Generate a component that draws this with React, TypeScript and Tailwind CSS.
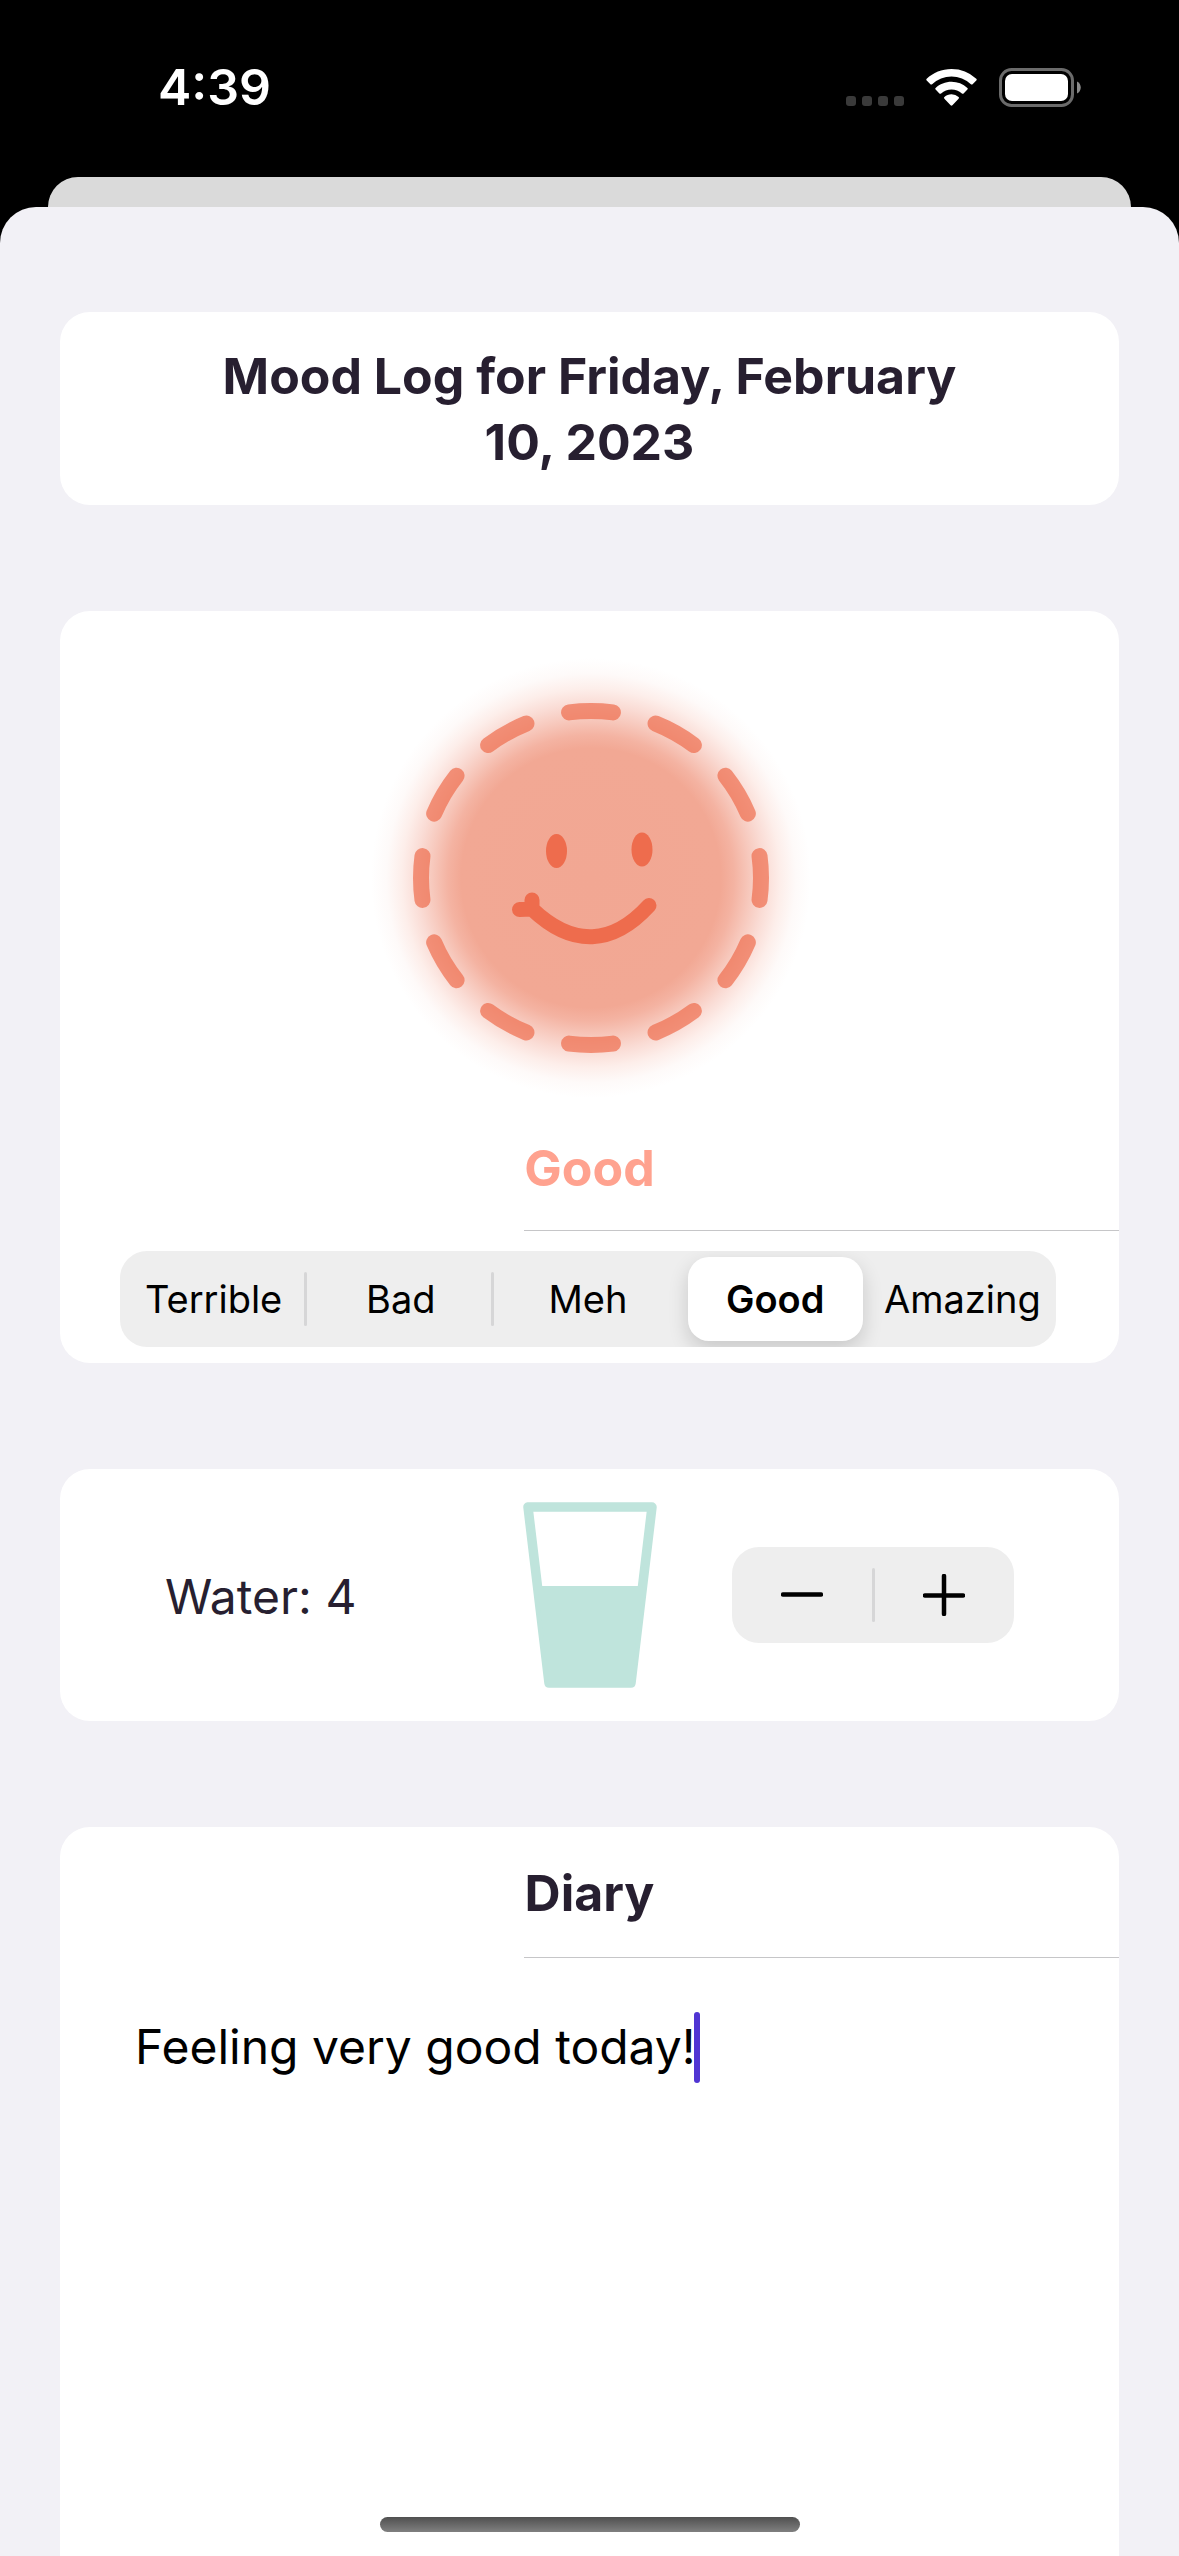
import { useState } from "react";
import type { ReactNode } from "react";

const moods = ["Terrible", "Bad", "Meh", "Good", "Amazing"];

function StatusBar() {
  return (
    <header className="flex h-[177px] items-start justify-between bg-black pt-[68px] pr-[98px] pl-[158px]">
      <time className="-mt-[14px] text-[50px] leading-[66px] font-semibold text-white">4:39</time>
      <div className="flex items-end">
        <div className="mr-[22px] flex gap-[6px] pb-px" aria-hidden="true">
          <span className="size-[10px] rounded-[3px] bg-[#3a3a3a]" />
          <span className="size-[10px] rounded-[3px] bg-[#3a3a3a]" />
          <span className="size-[10px] rounded-[3px] bg-[#3a3a3a]" />
          <span className="size-[10px] rounded-[3px] bg-[#3a3a3a]" />
        </div>
        <svg className="mr-[22px] h-[39px] w-[51px]" viewBox="0 0 51 39" aria-label="Wi-Fi" role="img">
          <g fill="#fff">
            <path d="M25.5 1C15.9 1 7.2 4.700 .7 10.700q-.9.900 0 1.800L4.400 16.200q.8.800 1.700 0A28.300 28.300 0 0 1 44.900 16.200q.9.800 1.700 0L50.300 12.500q.9-.9 0-1.800A36.500 36.500 0 0 0 25.500 1Z" />
            <path d="M25.500 13.700c-6.100 0-11.700 2.300-15.900 6.200q-.9.900 0 1.700l3.800 3.800q.8.800 1.700.1a15.600 15.600 0 0 1 20.800 0q.9.700 1.700-.1l3.800-3.800q.9-.8 0-1.700a23.500 23.500 0 0 0-15.900-6.200Z" />
            <path d="M25.500 26.300c-2.700 0-5.200 1-7.100 2.700q-.9.800 0 1.700l6.200 6.600q.9.900 1.800 0l6.200-6.600q.9-.9 0-1.700a10.500 10.500 0 0 0-7.100-2.700Z" />
          </g>
        </svg>
        <svg className="h-[39px] w-[82px]" viewBox="0 0 82 39" aria-label="Battery full" role="img">
          <rect x="1.500" y="1.500" width="72" height="36" rx="11" fill="none" stroke="#6b6b6b" strokeWidth="3" />
          <rect x="6" y="6" width="63" height="27" rx="7" fill="#fff" />
          <path d="M78 13.500c5 2 5 10 0 12Z" fill="#8a8a8a" />
        </svg>
      </div>
    </header>
  );
}

function Card({ children, className = "" }: { children: ReactNode; className?: string }) {
  return <section className={`bg-white ${className}`}>{children}</section>;
}

function Separator() {
  return <div className="ml-[43.8%] h-px bg-[#c6c6c8]" />;
}

function HappyFace() {
  return (
    <svg className="mx-auto h-[470px] w-[440px]" viewBox="0 0 440 470" role="img" aria-label="Smiling face">
      <defs>
        <radialGradient id="glow" gradientUnits="userSpaceOnUse" cx="221" cy="238" r="220">
          <stop offset="0" stopColor="#f2a793" />
          <stop offset="0.59" stopColor="#f2a894" />
          <stop offset="0.65" stopColor="#f4b3a2" />
          <stop offset="0.72" stopColor="#f7c8bc" />
          <stop offset="0.79" stopColor="#fadcd5" />
          <stop offset="0.86" stopColor="#fdeeea" />
          <stop offset="0.93" stopColor="#fefaf9" />
          <stop offset="1" stopColor="#ffffff" />
        </radialGradient>
      </defs>
      <circle cx="221" cy="238" r="220" fill="url(#glow)" />
      <ellipse
        cx="221"
        cy="238"
        rx="170"
        ry="167"
        fill="none"
        stroke="#ee6c4d"
        strokeOpacity="0.7"
        strokeWidth="16"
        strokeLinecap="round"
        pathLength={360}
        strokeDasharray="15 15"
        strokeDashoffset="7.500"
      />
      <g fill="#ee6c4d">
        <ellipse cx="186.500" cy="211" rx="10.500" ry="17" />
        <ellipse cx="272" cy="209.500" rx="10.500" ry="17" />
      </g>
      <path
        d="M149.500 269.500L161 269M162 260V269C203 308 243 305 279 265.500"
        fill="none"
        stroke="#ee6c4d"
        strokeWidth="15"
        strokeLinecap="round"
        strokeLinejoin="round"
      />
    </svg>
  );
}

function MoodPicker() {
  const [mood, setMood] = useState("Good");
  return (
    <>
      <HappyFace />
      <p className="mt-[25px] mb-[29px] text-center text-[50px] leading-[66px] font-bold text-[#ffa28f]">{mood}</p>
      <Separator />
      <div role="group" aria-label="Mood" className="mr-[63px] ml-[60px] mt-5 grid h-24 grid-cols-5 overflow-hidden rounded-[27px] bg-[#eeeeee]">
        {moods.map((name, i) => {
          const selected = mood === name;
          const divided = i > 0 && !selected && moods[i - 1] !== mood;
          return (
            <button
              key={name}
              type="button"
              aria-pressed={selected}
              onClick={() => setMood(name)}
              className="relative flex items-center justify-center py-[6px] text-[38px] leading-none text-black"
            >
              {divided && <span className="absolute top-[21px] -left-[3px] h-[54px] w-[3px] rounded-full bg-[#d6d6d7]" />}
              <span
                className={
                  selected
                    ? "mx-[6px] flex h-full flex-1 items-center justify-center rounded-[21px] bg-white font-semibold shadow-[0_8px_20px_rgba(0,0,0,0.16)]"
                    : ""
                }
              >
                {name}
              </span>
            </button>
          );
        })}
      </div>
    </>
  );
}

function WaterCounter() {
  const [glasses, setGlasses] = useState(4);
  return (
    <div className="grid grid-cols-[1fr_auto_1fr] items-center px-[105px] py-[33px]">
      <p className="pt-1 text-[48px] leading-[66px] text-[#271f30]">Water: {glasses}</p>
      <svg className="h-[186px] w-[136px]" viewBox="22 22 136 186" role="img" aria-label="Glass of water">
        <path d="M28 27H152L131 203H49Z" fill="none" stroke="#bfe4dc" strokeWidth="9.500" strokeLinejoin="round" />
        <path d="M37 106H143L131 203H49Z" fill="#bfe4dc" />
      </svg>
      <div className="flex h-24 w-[282px] items-center justify-self-end rounded-[27px] bg-[#eeeeee]">
        <button type="button" aria-label="Remove a glass" className="flex h-full flex-1 items-center justify-center" onClick={() => setGlasses(Math.max(0, glasses - 1))}>
          <svg className="size-[42px]" viewBox="0 0 42 42" aria-hidden="true">
            <path d="M2 20.500H40" stroke="#000" strokeWidth="4.500" strokeLinecap="round" />
          </svg>
        </button>
        <span className="h-[54px] w-[3px] rounded-full bg-[#d6d6d7]" />
        <button type="button" aria-label="Add a glass" className="flex h-full flex-1 items-center justify-center" onClick={() => setGlasses(glasses + 1)}>
          <svg className="size-[42px]" viewBox="0 0 42 42" aria-hidden="true">
            <path d="M2 21.500H40M21 2V40" stroke="#000" strokeWidth="4.500" strokeLinecap="round" />
          </svg>
        </button>
      </div>
    </div>
  );
}

function Diary() {
  const [entry, setEntry] = useState("Feeling very good today!");
  const [atRest, setAtRest] = useState(true);
  return (
    <>
      <h2 className="mb-[31px] text-center text-[50px] leading-[66px] font-bold text-[#271f30]">
        <label htmlFor="diary">Diary</label>
      </h2>
      <Separator />
      <div className="relative mx-[75px] mt-[54px] flex flex-1">
        <textarea
          id="diary"
          value={entry}
          onFocus={() => setAtRest(false)}
          onChange={(e) => setEntry(e.target.value)}
          className="flex-1 resize-none bg-transparent text-[48px] leading-[70px] text-black caret-[#5035d3] outline-none"
        />
        {atRest && <span className="absolute top-0 left-[559px] h-[71px] w-[6px] rounded-full bg-[#5035d3]" />}
      </div>
    </>
  );
}

export default function App() {
  return (
    <div className="flex min-h-screen flex-col bg-black font-['Inter',sans-serif]">
      <StatusBar />
      <div className="mx-12 h-[30px] rounded-t-[30px] bg-[#dadada]" />
      <main className="relative flex flex-1 flex-col gap-[106px] rounded-t-[36px] bg-[#f2f1f6] px-[60px] pt-[105px]">
        <Card className="rounded-[30px] px-[150px] pt-[31px] pb-[30px]">
          <h1 className="text-center text-[50px] leading-[66px] font-bold text-[#271f30]">
            Mood Log for Friday, February 10, 2023
          </h1>
        </Card>
        <Card className="rounded-[30px] pt-[29px] pb-4">
          <MoodPicker />
        </Card>
        <Card className="rounded-[30px]">
          <WaterCounter />
        </Card>
        <Card className="flex flex-1 flex-col rounded-t-[30px] pt-[33px]">
          <Diary />
        </Card>
        <div className="absolute bottom-6 left-1/2 h-[15px] w-[420px] -translate-x-1/2 rounded-full bg-linear-to-b from-[#505050] to-[#808080]" />
      </main>
    </div>
  );
}
